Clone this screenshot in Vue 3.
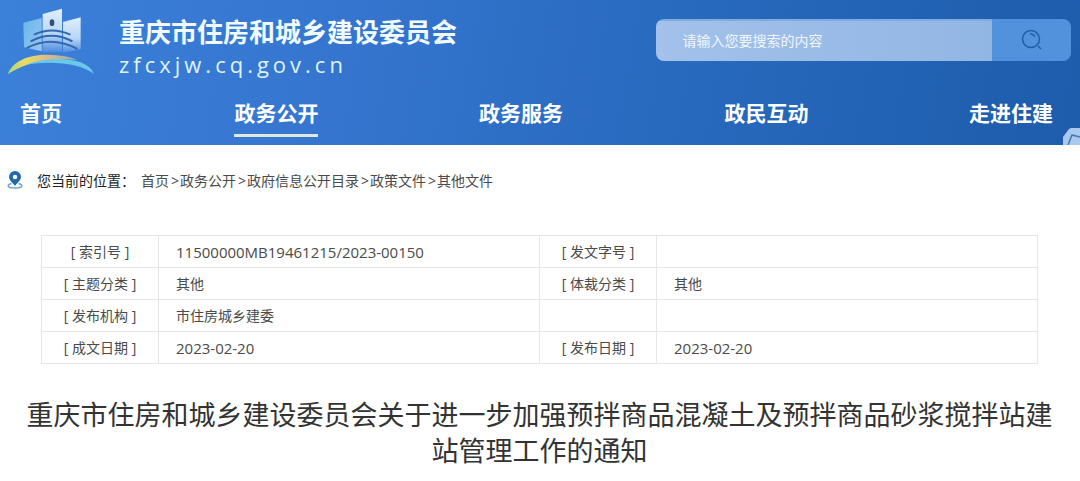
<script setup>
const nav = ['首页', '政务公开', '政务服务', '政民互动', '走进住建']
const active = '政务公开'
const crumbs = ['首页', '政务公开', '政府信息公开目录', '政策文件', '其他文件']
const rows = [
  ['[ 索引号 ]', '11500000MB19461215/2023-00150', '[ 发文字号 ]', ''],
  ['[ 主题分类 ]', '其他', '[ 体裁分类 ]', '其他'],
  ['[ 发布机构 ]', '市住房城乡建委', '', ''],
  ['[ 成文日期 ]', '2023-02-20', '[ 发布日期 ]', '2023-02-20'],
]
const isCode = (text) => /^[\w/-]+$/.test(text)
</script>

<template>
  <div class="page">
    <header class="header">
      <div class="top">
        <a class="brand" href="#">
          <svg class="logo" viewBox="24 24 258 201" aria-hidden="true">
            <defs>
              <linearGradient id="b1" x1="0" y1="0" x2="1" y2="1">
                <stop offset="0" stop-color="#62b8ea" />
                <stop offset="1" stop-color="#9cc4f2" />
              </linearGradient>
              <linearGradient id="b2" x1="0" y1="0" x2="0" y2="1">
                <stop offset="0" stop-color="#e0effc" />
                <stop offset="0.6" stop-color="#b8d6f6" />
                <stop offset="1" stop-color="#4d8ddd" />
              </linearGradient>
              <linearGradient id="arc" x1="0" y1="0" x2="1" y2="0">
                <stop offset="0" stop-color="#a9d77c" />
                <stop offset="0.25" stop-color="#eadb63" />
                <stop offset="0.6" stop-color="#d9b98a" />
                <stop offset="1" stop-color="#8fa9b8" />
              </linearGradient>
            </defs>
            <path d="M70 68 125 54V154L72 142Z" fill="url(#b1)" />
            <path d="M128 42 186 26V156H128Z" fill="url(#b2)" />
            <path d="M189 66 242 52V148L189 158Z" fill="url(#b2)" />
            <ellipse cx="156" cy="68" rx="7" ry="10" fill="#31537b" />
            <g fill="none" stroke="#3268ae" stroke-width="6" stroke-linecap="round">
              <path d="M104 103Q155 80 209 103" />
              <path d="M94 123Q155 91 215 123" />
              <path d="M82 143Q155 106 230 146" />
            </g>
            <path d="M24 222C36 184 88 163 143 164 183 165 211 170 231 179 155 174 89 180 24 222Z" fill="url(#arc)" />
            <path d="M74 195C150 166 264 170 282 222 239 189 153 181 74 195Z" fill="#69c9e8" />
          </svg>
          <span class="names">
            <span class="org">重庆市住房和城乡建设委员会</span>
            <span class="domain">zfcxjw.cq.gov.cn</span>
          </span>
        </a>
        <form class="search" @submit.prevent>
          <input type="search" aria-label="搜索" placeholder="请输入您要搜索的内容" />
          <button type="submit" aria-label="搜索">
            <svg viewBox="0 0 22 22" aria-hidden="true">
              <circle cx="10" cy="10" r="8.5" />
              <path d="M9 5Q12 4.500 14 7.500M17 17 20 20" />
            </svg>
          </button>
        </form>
      </div>
      <nav class="nav">
        <a v-for="item in nav" :key="item" href="#" :class="{ active: item === active }">{{ item }}</a>
      </nav>
      <svg class="float" viewBox="0 0 17 17" aria-hidden="true">
        <path d="M0 17V9L6 1Q7 0 9 0H17V17Z" fill="#a9c9ef" />
        <path d="M5 17 9 7 17 9" fill="none" stroke="#4876b4" stroke-width="1.500" />
      </svg>
    </header>

    <main>
      <nav class="crumbs" aria-label="当前位置">
        <svg class="pin" viewBox="0 0 16 18" aria-hidden="true">
          <path d="M4.500 12.500C-.5 13.500-.5 17 8 17S16.500 13.500 11.500 12.500" fill="none" stroke="#6f9fce" stroke-width="1.300" />
          <path d="M8 15C5 11 2 9 2 6A6 6 0 0 1 14 6C14 9 11 11 8 15Z" fill="#2468ae" />
          <circle cx="8" cy="6" r="2.200" fill="#fff" />
        </svg>
        <span class="here">您当前的位置：</span>
        <span class="trail">
          <template v-for="(c, i) in crumbs" :key="c"><span v-if="i" class="sep">&gt;</span><a href="#">{{ c }}</a></template>
        </span>
      </nav>

      <table class="info">
        <tbody>
          <tr v-for="r in rows" :key="r[0]">
            <th scope="row">{{ r[0] }}</th>
            <td :class="{ code: isCode(r[1]) }">{{ r[1] }}</td>
            <th scope="row">{{ r[2] }}</th>
            <td :class="{ code: isCode(r[3]) }">{{ r[3] }}</td>
          </tr>
        </tbody>
      </table>

      <h1>重庆市住房和城乡建设委员会关于进一步加强预拌商品混凝土及预拌商品砂浆搅拌站建站管理工作的通知</h1>
    </main>
  </div>
</template>

<style>
body {
  margin: 0;
  background: #fff;
}
</style>

<style scoped>
.page {
  font-family: "Open Sans", "Noto Sans CJK SC", sans-serif;
  font-size: 14px;
  color: #4a4a4a;
}
a {
  color: inherit;
  text-decoration: none;
}
.header {
  position: relative;
  height: 145px;
  background: linear-gradient(100deg, #3b80d9 0%, #3575cf 32%, #286abe 62%, #1e5cac 100%);
  color: #fff;
}
.top {
  display: flex;
  justify-content: space-between;
  padding: 8px 9px 0 8px;
}
.brand {
  display: flex;
  gap: 25px;
}
.logo {
  width: 86px;
  height: 67px;
}
.names {
  display: flex;
  flex-direction: column;
  padding-top: 8px;
}
.org {
  font-size: 26px;
  font-weight: 700;
  line-height: 32px;
  color: #f0fbff;
}
.domain {
  font-size: 22px;
  line-height: 32px;
  letter-spacing: 4px;
  color: #dff3ff;
}
.search {
  display: flex;
  width: 39%;
  height: 42px;
  margin-top: 11px;
  border-radius: 8px;
  overflow: hidden;
}
.search input {
  flex: 1;
  min-width: 0;
  box-sizing: border-box;
  padding: 0 26px 2px;
  border: 0;
  border-top: 2px solid #7dabe2;
  background: linear-gradient(90deg, #a3c1ea, #92b6e4);
  font: inherit;
  color: #fff;
  outline: 0;
}
.search input::placeholder {
  color: #f0f7ff;
  opacity: 1;
}
.search button {
  width: 79px;
  padding: 0;
  border: 0;
  background: #5291dc;
}
.search button svg {
  display: block;
  width: 22px;
  height: 22px;
  margin: 0 auto;
  fill: none;
  stroke: #1f5ca8;
  stroke-width: 1.5;
}
.nav {
  display: grid;
  grid-template-columns: 214fr 244fr 245fr 244fr auto;
  justify-items: start;
  padding: 15px 27px 0 20px;
  font-size: 21px;
  font-weight: 700;
  line-height: 36px;
}
.nav a {
  padding-bottom: 3px;
  border-bottom: 3px solid transparent;
}
.nav a.active {
  border-color: #dce9dc;
}
.float {
  position: absolute;
  right: 0;
  bottom: 0;
  width: 17px;
  height: 17px;
}
.crumbs {
  display: flex;
  align-items: center;
  height: 24px;
  padding: 23px 7px 0;
}
.pin {
  width: 16px;
  height: 18px;
  margin-right: 14px;
}
.here {
  color: #222;
  margin-right: 6px;
}
.sep {
  margin: 0 1px 0 2px;
}
.info {
  width: calc(100% - 83px);
  margin: 43px 42px 0 41px;
  border-collapse: collapse;
  table-layout: fixed;
}
.info th,
.info td {
  height: 31px;
  padding: 0;
  border: 1px solid #e6e6e6;
  line-height: 20px;
}
.info th {
  width: 116px;
  font-weight: 400;
}
.info td {
  padding-left: 17px;
}
.info .code {
  font-size: 15px;
}
h1 {
  margin: 33px 25px 0 24px;
  font-size: 27px;
  font-weight: 400;
  line-height: 36px;
  text-align: center;
  color: #333;
}
</style>
